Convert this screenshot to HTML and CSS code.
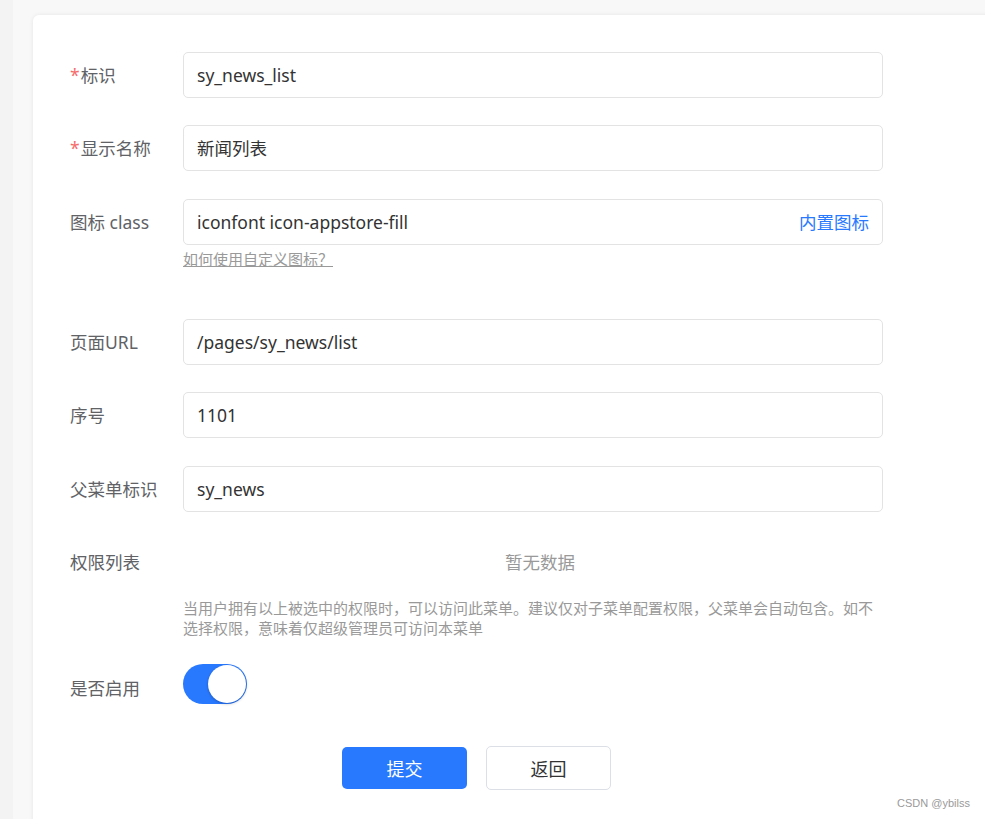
FILE: index.html
```html
<!DOCTYPE html>
<html lang="zh-CN">
<head>
<meta charset="utf-8">
<title>菜单编辑</title>
<link rel="stylesheet" href="styles.css">
</head>
<body>
<div class="layout">
  <div class="side-strip"></div>
  <main class="main">
    <section class="card">
      <form class="form">
        <div class="row">
          <label class="label"><span class="req">*</span>标识</label>
          <div class="field"><div class="input">sy_news_list</div></div>
        </div>
        <div class="row">
          <label class="label"><span class="req">*</span>显示名称</label>
          <div class="field"><div class="input">新闻列表</div></div>
        </div>
        <div class="row row-icon">
          <label class="label">图标 class</label>
          <div class="field">
            <div class="input input-suffix"><span>iconfont icon-appstore-fill</span><span class="suffix">内置图标</span></div>
            <a class="help-link">如何使用自定义图标？</a>
          </div>
        </div>
        <div class="row">
          <label class="label">页面URL</label>
          <div class="field"><div class="input">/pages/sy_news/list</div></div>
        </div>
        <div class="row">
          <label class="label">序号</label>
          <div class="field"><div class="input">1101</div></div>
        </div>
        <div class="row">
          <label class="label">父菜单标识</label>
          <div class="field"><div class="input">sy_news</div></div>
        </div>
        <div class="row">
          <label class="label">权限列表</label>
          <div class="field">
            <div class="empty">暂无数据</div>
            <p class="tip">当用户拥有以上被选中的权限时，可以访问此菜单。建议仅对子菜单配置权限，父菜单会自动包含。如不选择权限，意味着仅超级管理员可访问本菜单</p>
          </div>
        </div>
        <div class="row">
          <label class="label">是否启用</label>
          <div class="field"><div class="switch"><span class="knob"></span></div></div>
        </div>
        <div class="actions">
          <button type="button" class="btn btn-primary">提交</button>
          <button type="button" class="btn btn-default">返回</button>
        </div>
      </form>
    </section>
  </main>
</div>
<div class="watermark">CSDN @ybilss</div>
</body>
</html>
```

FILE: styles.css
```css
html, body {
  margin: 0;
  padding: 0;
  height: 100%;
  overflow: hidden;
}
body {
  background: #f8f8f8;
  font-family: "Noto Sans", "Noto Sans CJK SC", sans-serif;
}
.layout {
  display: flex;
  height: 819px;
}
.side-strip {
  width: 13px;
  flex: none;
  background: #f3f3f3;
}
.main {
  flex: 1;
  padding: 15px 0 0 20px;
  overflow: hidden;
}
.card {
  width: 1000px;
  height: 900px;
  background: #fff;
  border-radius: 6px;
  box-shadow: 0 0 4px rgba(0,0,0,0.08);
  padding: 37px 0 0 37px;
  box-sizing: border-box;
}
.row {
  display: flex;
  margin-bottom: 27.3px;
}
.label {
  width: 113px;
  flex: none;
  height: 46px;
  line-height: 46px;
  font-size: 17.5px;
  color: #606266;
  white-space: nowrap;
}
.req {
  color: #f56c6c;
  margin-right: 1px;
}
.field {
  width: 700px;
}
.input {
  height: 46px;
  box-sizing: border-box;
  border: 1px solid #e3e3e3;
  border-radius: 5px;
  padding: 0 13px;
  line-height: 44px;
  font-size: 17.5px;
  color: #333;
}
.input-suffix {
  display: flex;
  justify-content: space-between;
}
.suffix {
  color: #2979ff;
}
.help-link {
  display: block;
  width: max-content;
  margin-top: 4px;
  font-size: 15px;
  line-height: 20px;
  color: #999;
  text-decoration: underline;
  padding-right: 6px;
}
.row-icon {
  margin-bottom: 50.4px;
}
.empty {
  height: 46px;
  line-height: 46px;
  text-align: center;
  font-size: 17.5px;
  color: #999;
  padding-left: 14px;
}
.tip {
  margin: 13px 0 0;
  font-size: 15px;
  line-height: 20px;
  color: #999;
}
.switch {
  position: relative;
  width: 64px;
  height: 40px;
  border-radius: 20px;
  background: #2979ff;
  margin-top: -1px;
}
.knob {
  position: absolute;
  top: 1px;
  right: 1px;
  width: 38px;
  height: 38px;
  border-radius: 50%;
  background: #fff;
  box-shadow: 0 1px 3px rgba(0,0,0,0.25);
}
.actions {
  display: flex;
  gap: 19px;
  padding-left: 272px;
  margin-top: 35.3px;
  align-items: center;
}
.btn {
  width: 125px;
  font-family: "Noto Sans", "Noto Sans CJK SC", sans-serif;
  font-size: 18px;
  border-radius: 5px;
  cursor: pointer;
}
.btn-primary {
  height: 42px;
  background: #2979ff;
  color: #fff;
  border: none;
}
.btn-default {
  height: 44px;
  background: #fff;
  color: #333;
  border: 1px solid #dcdfe6;
}
.watermark {
  position: absolute;
  left: 897px;
  top: 797px;
  font-family: "Liberation Sans", Arial, sans-serif;
  font-size: 11px;
  color: #9a9a9a;
}
```
